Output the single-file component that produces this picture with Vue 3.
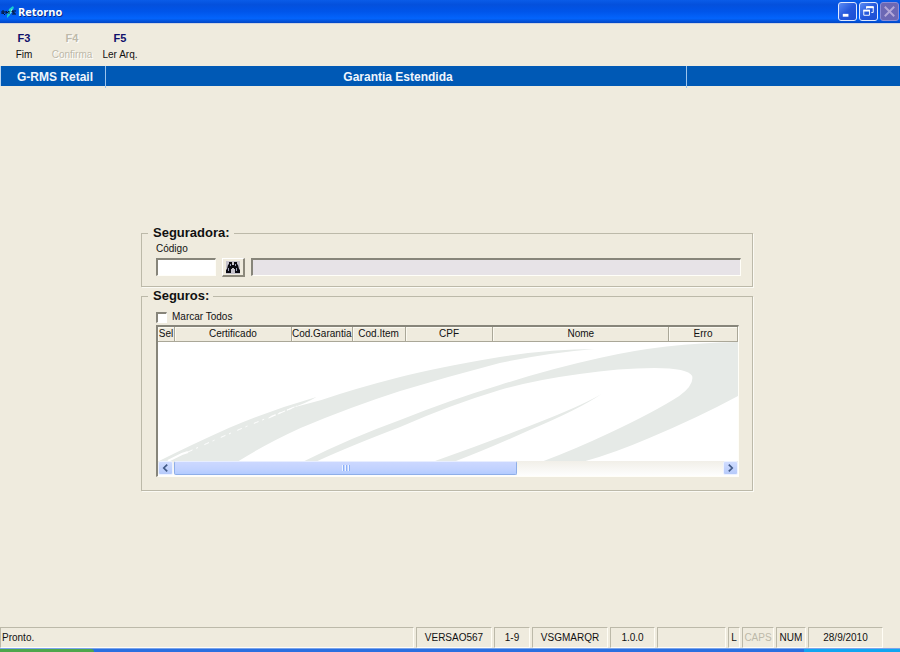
<script setup>
import { ref } from 'vue'

const codigo = ref('')
const descricao = ref('')
const marcarTodos = ref(false)

const columns = [
  { label: 'Sel', width: 17 },
  { label: 'Certificado', width: 117 },
  { label: 'Cod.Garantia', width: 61 },
  { label: 'Cod.Item', width: 53 },
  { label: 'CPF', width: 88 },
  { label: 'Nome', width: 176 },
  { label: 'Erro', width: 69 },
]
const totalWidth = columns.reduce((sum, c) => sum + c.width, 0)
</script>

<template>
  <div class="window">
    <header class="titlebar">
      <svg class="logo" viewBox="0 0 16 16" aria-hidden="true">
        <path d="M6 12 8 5l4-3 1 2-3 3-1 4-3 3z" fill="#16cfd0" />
        <path d="M7 9h3l1-4" fill="none" stroke="#8df5ee" />
        <path d="M1 10V7h2v2H1M2 9l2 2M5 10V7l1 2 2-2v3M13 7h-2v1h2v2h-2" fill="none" stroke="#06142f" />
        <path d="M13 7h2M13 10h2" stroke="#06142f" />
      </svg>
      <h1>Retorno</h1>
      <div class="controls">
        <button type="button" aria-label="Minimizar">
          <svg viewBox="0 0 18 18"><path d="M4 13h6" stroke="#fff" stroke-width="3" /></svg>
        </button>
        <button type="button" aria-label="Restaurar">
          <svg viewBox="0 0 18 18">
            <path d="M7 6V4h7v6h-2" fill="none" stroke="#fff" />
            <path d="M6.500 4.500h8" stroke="#fff" stroke-width="2" />
            <path d="M4 8h6v5H4z" fill="none" stroke="#fff" />
            <path d="M3.500 8h7" stroke="#fff" stroke-width="2" />
          </svg>
        </button>
        <button type="button" class="close" aria-label="Fechar" disabled>
          <svg viewBox="0 0 18 18"><path d="m4 4 10 10M14 4 4 14" stroke="#b3a8d8" stroke-width="2" /></svg>
        </button>
      </div>
    </header>

    <nav class="toolbar">
      <button type="button"><b>F3</b><span>Fim</span></button>
      <button type="button" disabled><b>F4</b><span>Confirma</span></button>
      <button type="button"><b>F5</b><span>Ler Arq.</span></button>
    </nav>

    <div class="banner">
      <strong>G-RMS Retail</strong>
      <strong>Garantia Estendida</strong>
      <span></span>
    </div>

    <main>
      <fieldset class="insurer">
        <legend>Seguradora:</legend>
        <label for="codigo">Código</label>
        <div class="row">
          <input id="codigo" v-model="codigo" class="code" type="text" />
          <button type="button" class="find" aria-label="Pesquisar">
            <svg viewBox="0 0 14 13">
              <rect width="14" height="13" fill="#c6c3cc" />
              <path d="M3 1h3v3h2V1h3v2l1 1 1 4 1 1v3H9V8H8V7H6v1H5v4H0V9l1-1 1-4 1-1z" fill="#0a0a12" />
              <path d="M4.500 3v2M2.500 7v3M9.500 3v2M10.500 7v3" stroke="#9a9eb8" />
            </svg>
          </button>
          <input v-model="descricao" class="desc" type="text" readonly aria-label="Descrição" />
        </div>
      </fieldset>

      <fieldset class="policies">
        <legend>Seguros:</legend>
        <label class="check"><input v-model="marcarTodos" type="checkbox" />Marcar Todos</label>
        <div class="grid">
          <table>
            <colgroup>
              <col v-for="c in columns" :key="c.label" :style="{ width: (c.width / totalWidth) * 100 + '%' }" />
            </colgroup>
            <thead>
              <tr><th v-for="c in columns" :key="c.label" scope="col">{{ c.label }}</th></tr>
            </thead>
          </table>
          <svg class="swoosh" viewBox="157 342 582 119" preserveAspectRatio="none" aria-hidden="true">
            <g fill="#e6eae7">
              <path d="M158 461Q190 445 228 428 270 410 316 397 306 403 291 408L321 400Q353 389 400 377 440 367 500 357 550 349 595 349 547 353 500 363 450 376 400 391 350 407 300 428 265 444 238 461Z" />
              <path d="M304 461Q350 438 400 420 450 400 500 385 550 369 600 358 665 343 739 342V396Q700 417 650 438 615 453 586 461H544Q576 449 610 433 655 412 680 396 695 385 693 376 689 368 655 368 620 368 580 374 535 380 500 390 450 405 400 427 350 446 317 461Z" />
              <path d="M435 461Q495 440 550 418 585 404 602 394 580 409 530 430 490 448 456 461Z" />
            </g>
            <path d="M167 461 181 454 187 452" fill="none" stroke="#fff" stroke-width="2" />
            <path d="M187 452Q240 428 292 408" fill="none" stroke="#fff" stroke-dasharray="5 4 2 7" />
            <path d="M268 418 296 406" stroke="#fff" stroke-dasharray="8 2" />
          </svg>
          <div class="scrollbar">
            <button type="button" aria-label="Rolar para a esquerda">
              <svg viewBox="0 0 14 14"><path d="M9 3 5 7l4 4" fill="none" stroke="#435b88" stroke-width="2" /></svg>
            </button>
            <div class="track"><div class="thumb"><i></i><i></i><i></i></div></div>
            <button type="button" aria-label="Rolar para a direita">
              <svg viewBox="0 0 14 14"><path d="m5 3 4 4-4 4" fill="none" stroke="#435b88" stroke-width="2" /></svg>
            </button>
          </div>
        </div>
      </fieldset>
    </main>

    <footer class="status">
      <span class="message">Pronto.</span>
      <span class="version">VERSAO567</span>
      <span class="range">1-9</span>
      <span class="program">VSGMARQR</span>
      <span class="release">1.0.0</span>
      <span class="blank"></span>
      <span class="lock">L</span>
      <span class="caps off">CAPS</span>
      <span class="num">NUM</span>
      <span class="date">28/9/2010</span>
    </footer>
    <div class="taskbar"><i class="start"></i><i class="tray"></i></div>
  </div>
</template>

<style>
body {
  margin: 0;
  background: #efebde;
}
</style>

<style scoped>
* {
  box-sizing: border-box;
}
.window {
  display: flex;
  flex-direction: column;
  min-height: 100vh;
  background: #efebde;
  color: #111;
  font: 10px/14px "Liberation Sans", sans-serif;
}
button,
input {
  margin: 0;
  padding: 0;
  border: 0;
  font: inherit;
  color: inherit;
}
.titlebar {
  display: flex;
  align-items: center;
  height: 24px;
  padding: 0 1px;
  border-bottom: 1px solid #cfd3df;
  background: linear-gradient(#0a5ce8, #0450dc 20%, #0055ea 50%, #0364fc 80%, #0246c4);
}
.logo {
  width: 16px;
  height: 16px;
}
h1 {
  flex: 1;
  margin: 0 0 0 1px;
  color: #fff;
  font: bold 11px/16px "Open Sans", "Liberation Sans", sans-serif;
  text-shadow: 1px 1px #0a2a86;
}
.controls {
  display: flex;
  gap: 2px;
}
.controls button {
  width: 19px;
  height: 19px;
  border: 1px solid #dfe8ff;
  border-radius: 3px;
  background: linear-gradient(135deg, #5c8cf4, #2458dc 50%, #1c4ed4);
}
.controls .close {
  border-color: #8d8cd4;
  background: #6c68b4;
}
.controls svg {
  display: block;
  width: 17px;
  height: 17px;
}
.toolbar {
  display: flex;
  height: 42px;
  padding: 7px 0 0;
}
.toolbar button {
  display: flex;
  flex-direction: column;
  align-items: center;
  gap: 3px;
  width: 48px;
  background: none;
  white-space: nowrap;
}
.toolbar b {
  color: #10106b;
  font-size: 11px;
}
.toolbar button:disabled,
.toolbar button:disabled b {
  color: #bdb9a9;
  text-shadow: 1px 1px #fff;
}
.banner {
  display: grid;
  grid-template-columns: 105fr 581fr 213fr;
  height: 20px;
  border-left: 1px solid #b8d4f0;
  background: #0059b5;
  color: #f0f5fc;
  font: bold 12px/22px "Liberation Sans", sans-serif;
  text-align: center;
}
.banner strong {
  padding-left: 4px;
  border-right: 1px solid #9cc4ec;
}
main {
  flex: 1;
  width: 68%;
  margin: 0 auto;
  padding: 140px 0 24px;
  position: relative;
  right: 3px;
}
fieldset {
  min-width: 0;
  margin: 0;
  border: 1px solid #bcb9a9;
  box-shadow: 1px 1px #fbfaf4;
}
legend {
  margin-left: -8px;
  padding: 0 4px 0 5px;
  font: bold 13px/14px "Liberation Sans", sans-serif;
}
.insurer {
  padding: 2px 11px 9px 14px;
}
.row {
  display: flex;
  margin-top: 2px;
}
.insurer label {
  display: block;
}
.row input {
  height: 18px;
  border: 1px solid #fffef8;
  border-top: 2px solid #87857a;
  border-left: 2px solid #87857a;
  background: #fff;
}
.row .code {
  width: 60px;
}
.row .desc {
  flex: 1;
  min-width: 0;
  background: #e7e3e7;
}
.find {
  display: grid;
  place-items: center;
  width: 23px;
  height: 19px;
  margin: 0 6px;
  border: 1px solid #fff;
  border-right: 2px solid #8c897c;
  border-bottom: 2px solid #8c897c;
  background: #efebde;
}
.find svg {
  width: 14px;
  height: 13px;
}
.policies {
  margin-top: 2px;
  padding: 7px 13px 13px 14px;
}
.check {
  display: flex;
  align-items: center;
  gap: 5px;
  width: max-content;
}
.check input {
  appearance: none;
  width: 11px;
  height: 11px;
  border: 1px solid #fff;
  border-top: 2px solid #87857a;
  border-left: 2px solid #87857a;
  background: #fff;
}
.check input:checked {
  background: #111;
}
.grid {
  margin-top: 1px;
  border: 1px solid #fffef8;
  border-top: 2px solid #87857a;
  border-left: 2px solid #87857a;
  background: #fff;
}
table {
  width: 100%;
  table-layout: fixed;
  border-collapse: separate;
  border-spacing: 0;
}
th {
  height: 15px;
  padding: 0;
  border-right: 1px solid #aaa798;
  border-bottom: 1px solid #aaa798;
  box-shadow: inset 1px 1px #fbf9f0;
  background: #efebde;
  font-weight: normal;
  line-height: 14px;
  white-space: nowrap;
}
.swoosh {
  display: block;
  width: 100%;
  height: 119px;
}
.scrollbar {
  display: flex;
  height: 15px;
  padding-bottom: 1px;
  background: linear-gradient(#f1efe8, #fefefe);
}
.scrollbar button {
  width: 15px;
  height: 14px;
  border: 1px solid #edf2ff;
  border-radius: 2px;
  background: linear-gradient(#d0dcff, #b6cafa);
}
.scrollbar svg {
  display: block;
  width: 13px;
  height: 12px;
}
.track {
  flex: 1;
  padding-left: 1px;
}
.thumb {
  display: flex;
  align-items: center;
  justify-content: center;
  gap: 1px;
  width: 62.5%;
  height: 14px;
  border: 1px solid #8eaee8;
  border-top-color: #e8eeff;
  border-radius: 2px;
  background: linear-gradient(#ccd8ff, #c1d2ff 60%, #b3cbff);
}
.thumb i {
  width: 2px;
  height: 6px;
  border-left: 1px solid #eef4ff;
  border-right: 1px solid #8cb0f8;
}
.status {
  display: flex;
  gap: 2px;
  height: 21px;
  padding-right: 17px;
  line-height: 20px;
  text-align: center;
}
.status span {
  border: 1px solid #fffdf5;
  border-top-color: #bcb9a9;
  border-left-color: #bcb9a9;
  white-space: nowrap;
}
.status .message {
  flex: 1;
  padding-left: 1px;
  text-align: left;
}
.version {
  width: 76px;
}
.range {
  width: 36px;
}
.program {
  width: 76px;
}
.release {
  width: 45px;
}
.blank {
  width: 69px;
}
.lock {
  width: 12px;
}
.caps {
  width: 32px;
}
.num {
  width: 30px;
}
.date {
  width: 75px;
}
.off {
  color: #bdb9a9;
}
.taskbar {
  display: flex;
  justify-content: space-between;
  height: 4px;
  border-top: 1px solid #7ba4ec;
  background: #2a6fe0;
}
.start {
  width: 94px;
  border-radius: 0 3px 0 0;
  background: #4ea64c;
}
.tray {
  width: 96px;
  background: #12a5f0;
}
</style>
